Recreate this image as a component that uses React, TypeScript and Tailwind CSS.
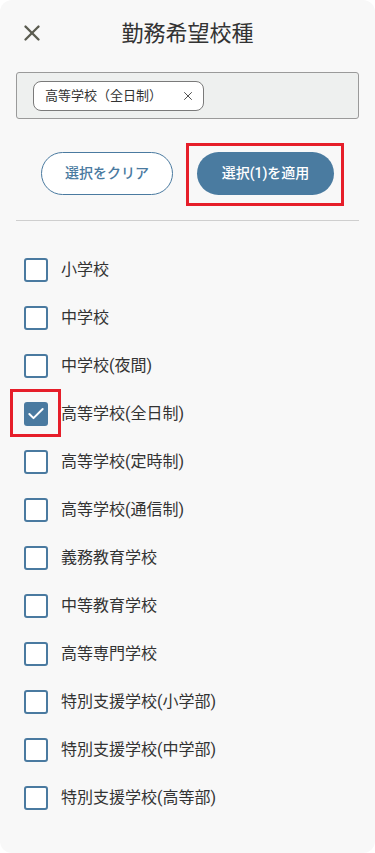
import { X, Check } from "lucide-react";

const SCHOOL_TYPES = [
  "小学校",
  "中学校",
  "中学校(夜間)",
  "高等学校(全日制)",
  "高等学校(定時制)",
  "高等学校(通信制)",
  "義務教育学校",
  "中等教育学校",
  "高等専門学校",
  "特別支援学校(小学部)",
  "特別支援学校(中学部)",
  "特別支援学校(高等部)",
];

const selected = new Set(["高等学校(全日制)"]);

function Row({ label }: { label: string }) {
  const checked = selected.has(label);
  return (
    <li className="relative flex items-center h-12 pl-6">
      {checked && (
        <span className="absolute left-[10px] top-[-1px] w-[51px] h-[48px] border-[3px] border-[#e61e2a]" />
      )}
      <span
        className={
          checked
            ? "w-6 h-6 rounded-[3px] bg-[#4a7aa0] flex items-center justify-center"
            : "w-6 h-6 rounded-[3px] border-2 border-[#4a7aa0] bg-white"
        }
      >
        {checked && <Check size={20} strokeWidth={2.4} className="text-white" />}
      </span>
      <span className="ml-[13px] text-[16px] text-[#333]">{label}</span>
    </li>
  );
}

export default function App() {
  return (
    <div
      className="min-h-screen bg-white"
      style={{ fontFamily: 'Roboto, "Noto Sans CJK JP", sans-serif' }}
    >
      <div className="h-[853px] bg-[#f8f8f8] rounded-[12px] flex flex-col">
        <header className="relative h-[66px] flex items-center justify-center">
          <X size={26} strokeWidth={2.2} className="absolute left-[19px] top-[20px] text-[#5b5c50]" />
          <h1 className="text-[22px] text-[#333]">勤務希望校種</h1>
        </header>

        <div className="mx-4 mt-[6px] h-[47px] bg-[#eef0ef] border border-[#9a9a9a] rounded-[3px] flex items-center px-4">
          <span className="flex items-center h-[30px] bg-white border border-[#7a7a7a] rounded-[8px] pl-[11px] pr-[8px] text-[13px] text-[#333]">
            高等学校（全日制）
            <X size={14} strokeWidth={1.6} className="ml-[19px] text-[#444]" />
          </span>
        </div>

        <div className="flex items-center justify-center gap-6 mt-[33px] h-[43px]">
          <button className="w-[132px] h-[43px] rounded-full border border-[#4a7aa0] bg-white text-[14px] font-medium text-[#4a7aa0]">
            選択をクリア
          </button>
          <div className="relative">
            <span className="absolute left-[-11px] top-[-9px] w-[158px] h-[63px] border-[3px] border-[#e61e2a]" />
            <button className="relative w-[137px] h-[43px] rounded-full bg-[#4a7ba0] text-[14px] font-medium text-white">
              選択(1)を適用
            </button>
          </div>
        </div>

        <div className="mx-4 mt-[25px] border-t border-[#cfcfcf]" />

        <ul className="mt-[25px]">
          {SCHOOL_TYPES.map((t) => (
            <Row key={t} label={t} />
          ))}
        </ul>
      </div>
    </div>
  );
}
